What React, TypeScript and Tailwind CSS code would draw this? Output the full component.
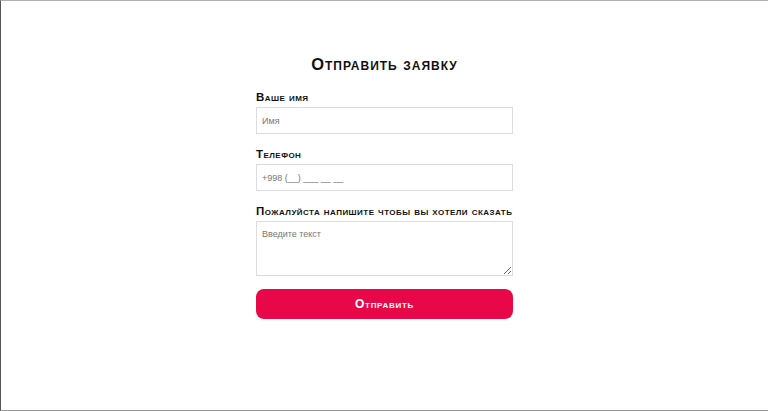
export default function App() {
  const label =
    "block whitespace-nowrap text-[11.5px] font-bold text-[#111] tracking-[0.04em] [font-variant:small-caps] leading-[12px]";
  const field =
    "w-full border border-[#dcdcdc] bg-white px-[5px] text-[9px] text-[#555] placeholder:text-[#777] outline-none";
  return (
    <div
      className="h-[411px] w-[768px] border-t border-l border-b border-t-[#b0b0b0] border-l-[#555] border-b-[#999] bg-white"
      style={{ fontFamily: "'Liberation Sans', Arial, sans-serif" }}
    >
      <div className="mx-auto flex w-[257px] flex-col pt-[53px]">
        <h1 className="text-center text-[16.5px] font-bold tracking-[0.06em] text-[#111] [font-variant:small-caps] leading-[20px]">
          Отправить заявку
        </h1>
        <form className="mt-[17px] flex flex-col" onSubmit={(e) => e.preventDefault()}>
          <label className={label}>Ваше имя</label>
          <input className={`${field} mt-[4px] h-[27px]`} placeholder="Имя" />
          <label className={`${label} mt-[14px]`}>Телефон</label>
          <input className={`${field} mt-[4px] h-[27px]`} placeholder="+998 (__) ___ __ __" />
          <label className={`${label} mt-[14px]`}>Пожалуйста напишите чтобы вы хотели сказать</label>
          <textarea
            className={`${field} mt-[4px] h-[55px] resize-y py-[8px] leading-none`}
            placeholder="Введите текст"
          />
          <button
            type="submit"
            className="mt-[13px] h-[30px] w-full rounded-[8px] bg-[#e8084a] text-[12px] font-bold tracking-[0.06em] text-white [font-variant:small-caps]"
          >
            Отправить
          </button>
        </form>
      </div>
    </div>
  );
}
